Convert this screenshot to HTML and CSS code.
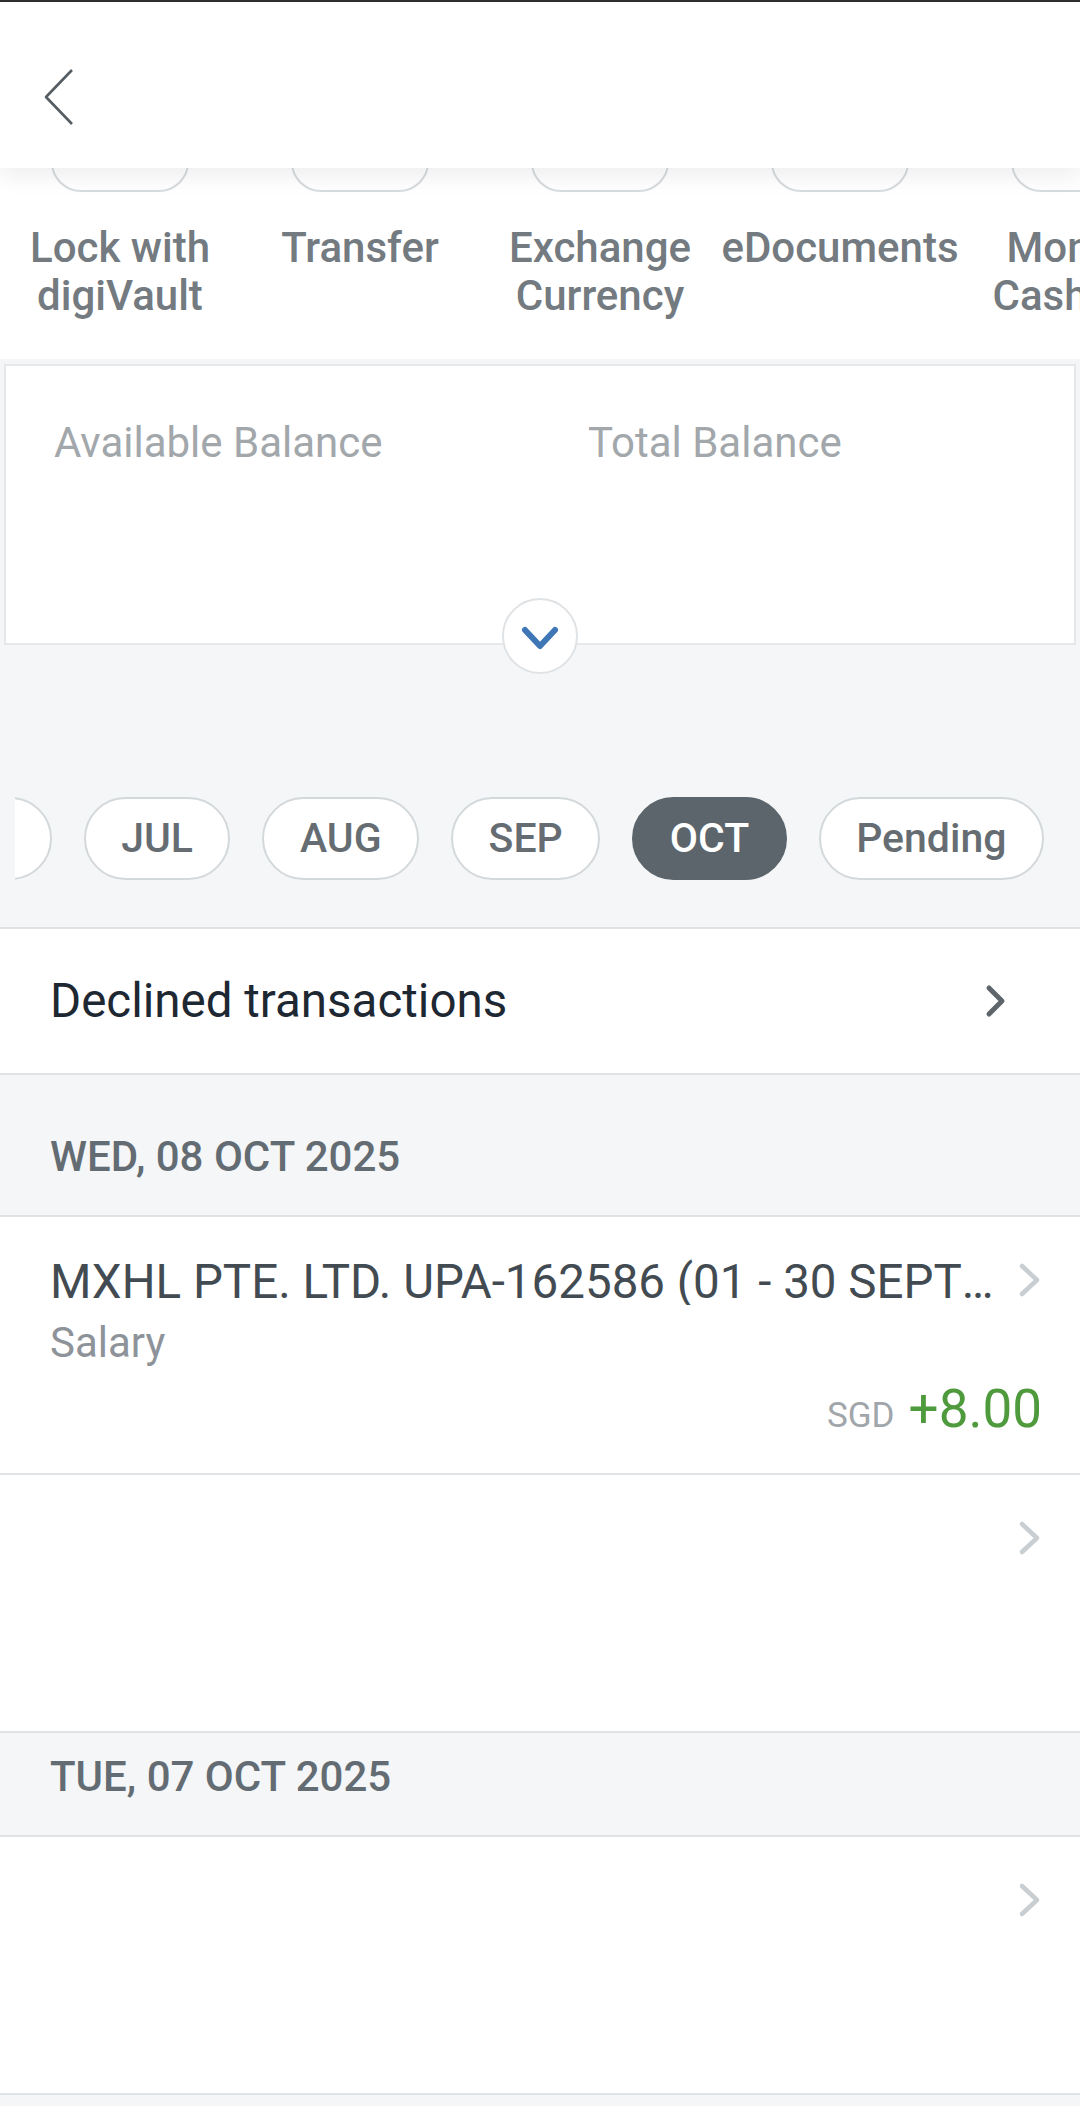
FILE: index.html
```html
<!DOCTYPE html>
<html lang="en">
<head>
<meta charset="utf-8">
<title>Account</title>
<link rel="stylesheet" href="styles.css">
</head>
<body>
<header class="topbar">
  <svg class="back" width="32" height="58" viewBox="0 0 32 58"><polyline points="29,2 3,29 29,56" fill="none" stroke="#555c62" stroke-width="2.6" stroke-linejoin="round"/></svg>
</header>

<main class="page">
  <section class="shortcuts">
    <div class="shortcut"><div class="sc-icon"></div><div class="sc-label">Lock with<br>digiVault</div></div>
    <div class="shortcut"><div class="sc-icon"></div><div class="sc-label">Transfer</div></div>
    <div class="shortcut"><div class="sc-icon"></div><div class="sc-label">Exchange<br>Currency</div></div>
    <div class="shortcut"><div class="sc-icon"></div><div class="sc-label">eDocuments</div></div>
    <div class="shortcut"><div class="sc-icon"></div><div class="sc-label">Monitor<br>Cashflow</div></div>
  </section>

  <section class="summary">
    <div class="balance-card">
      <div class="bal-col">Available Balance</div>
      <div class="bal-col">Total Balance</div>
      <button class="expand" aria-label="Expand">
        <svg width="38" height="26" viewBox="0 0 38 26"><polyline points="4,4 19,20 34,4" fill="none" stroke="#3f76b5" stroke-width="6" stroke-linecap="round" stroke-linejoin="round"/></svg>
      </button>
    </div>
    <div class="months">
      <div class="pill pill-first">JUN</div>
      <div class="pill">JUL</div>
      <div class="pill">AUG</div>
      <div class="pill">SEP</div>
      <div class="pill pill-active">OCT</div>
      <div class="pill">Pending</div>
    </div>
  </section>

  <div class="declined">
    <span>Declined transactions</span>
    <svg width="22" height="34" viewBox="0 0 22 34"><polyline points="4,4 17,17 4,30" fill="none" stroke="#5e666c" stroke-width="5" stroke-linecap="round" stroke-linejoin="round"/></svg>
  </div>

  <div class="date-head date-head-first">WED, 08 OCT 2025</div>
  <div class="txn">
    <div class="txn-top">
      <div class="txn-main">
        <div class="txn-title">MXHL PTE. LTD. UPA-162586 (01 - 30 SEPTEMBER 2025)</div>
        <div class="txn-cat">Salary</div>
      </div>
      <svg class="txn-chev" width="24" height="36" viewBox="0 0 24 36"><polyline points="4,4 19,18 4,32" fill="none" stroke="#c8ced2" stroke-width="4.5" stroke-linecap="round" stroke-linejoin="round"/></svg>
    </div>
    <div class="txn-amount"><span class="ccy">SGD</span><span class="amt">+8.00</span></div>
  </div>
  <div class="txn">
    <div class="txn-top">
      <div class="txn-main"></div>
      <svg class="txn-chev" width="24" height="36" viewBox="0 0 24 36"><polyline points="4,4 19,18 4,32" fill="none" stroke="#c8ced2" stroke-width="4.5" stroke-linecap="round" stroke-linejoin="round"/></svg>
    </div>
  </div>

  <div class="date-head">TUE, 07 OCT 2025</div>
  <div class="txn">
    <div class="txn-top">
      <div class="txn-main"></div>
      <svg class="txn-chev" width="24" height="36" viewBox="0 0 24 36"><polyline points="4,4 19,18 4,32" fill="none" stroke="#c8ced2" stroke-width="4.5" stroke-linecap="round" stroke-linejoin="round"/></svg>
    </div>
  </div>
</main>
</body>
</html>
```

FILE: styles.css
```css
* { box-sizing: border-box; }
html, body { margin: 0; padding: 0; }
body {
  width: 1080px;
  height: 2106px;
  overflow: hidden;
  background: #f4f6f8;
  font-family: Roboto, "Liberation Sans", Arial, sans-serif;
  position: relative;
}

.topbar {
  position: absolute;
  top: 0; left: 0; right: 0;
  height: 168px;
  background: #ffffff;
  border-top: 2px solid #2e2e2e;
  box-shadow: 0 8px 22px rgba(0, 0, 0, 0.07);
  z-index: 5;
}
.back { position: absolute; left: 43px; top: 66px; }

.page { display: flex; flex-direction: column; }

/* Shortcuts */
.shortcuts {
  display: flex;
  background: #ffffff;
  padding: 52px 0 39px;
  overflow: hidden;
}
.shortcut {
  flex: 0 0 240px;
  display: flex;
  flex-direction: column;
  align-items: center;
}
.sc-icon {
  width: 138px;
  height: 140px;
  border: 2px solid #d6dbde;
  border-radius: 30px;
}
.sc-label {
  margin-top: 32px;
  font-size: 42px;
  line-height: 48px;
  font-weight: 500;
  color: #737a80;
  text-align: center;
  white-space: nowrap;
}

/* Summary */
.summary { padding-top: 5px; }
.balance-card {
  position: relative;
  margin: 0 4px;
  height: 281px;
  background: #ffffff;
  border: 2px solid #e6e9eb;
  display: grid;
  grid-template-columns: 1fr 1fr;
  align-items: start;
}
.bal-col {
  padding: 53px 0 0 48px;
  font-size: 42px;
  line-height: 48px;
  color: #a2a7ab;
}
.expand {
  position: absolute;
  left: 50%;
  bottom: -31px;
  margin-left: -38px;
  width: 76px;
  height: 76px;
  border-radius: 50%;
  border: 2px solid #dfe3e6;
  background: #ffffff;
  padding: 6px 0 0;
  display: flex;
  align-items: center;
  justify-content: center;
}

.months {
  display: flex;
  gap: 32px;
  margin: 152px 0 47px 15px;
  overflow: hidden;
}
.pill {
  flex: 0 0 auto;
  height: 83px;
  padding: 0 35.5px;
  border: 2px solid #d3d8db;
  border-radius: 42px;
  background: #ffffff;
  font-size: 41px;
  line-height: 79px;
  font-weight: 500;
  color: #656d73;
}
.pill-first { margin-left: -117px; }
.pill-active {
  background: #5c656b;
  border-color: #5c656b;
  color: #ffffff;
}

/* Declined */
.declined {
  height: 148px;
  background: #ffffff;
  border-top: 2px solid #dfe3e6;
  border-bottom: 2px solid #dfe3e6;
  padding: 0 73px 0 50px;
  display: flex;
  align-items: center;
  justify-content: space-between;
  font-size: 47.5px;
  color: #1e2832;
}

/* Date headers */
.date-head {
  padding: 20px 50px 34px;
  font-size: 42px;
  line-height: 48px;
  font-weight: 500;
  color: #646c73;
  border-bottom: 2px solid #dfe3e6;
}
.date-head-first { padding-top: 58px; }

/* Transactions */
.txn {
  height: 258px;
  background: #ffffff;
  border-bottom: 2px solid #dfe3e6;
  padding: 0 38px 0 50px;
  display: flex;
  flex-direction: column;
}
.txn-top { display: flex; }
.txn-main {
  flex: 1;
  min-width: 0;
  padding-top: 42px;
  padding-right: 22px;
}
.txn-title {
  font-size: 47.5px;
  line-height: 46px;
  color: #434b52;
  white-space: nowrap;
  overflow: hidden;
  text-overflow: ellipsis;
}
.txn-cat {
  margin-top: 15px;
  font-size: 42px;
  line-height: 46px;
  color: #8d9399;
}
.txn-chev { flex: 0 0 auto; margin-top: 45px; }
.txn-amount {
  margin-top: 13px;
  text-align: right;
  line-height: 60px;
}
.ccy { font-size: 35px; color: #a1a6aa; margin-right: 14px; }
.amt { font-size: 53px; color: #4e9a3c; }
```
